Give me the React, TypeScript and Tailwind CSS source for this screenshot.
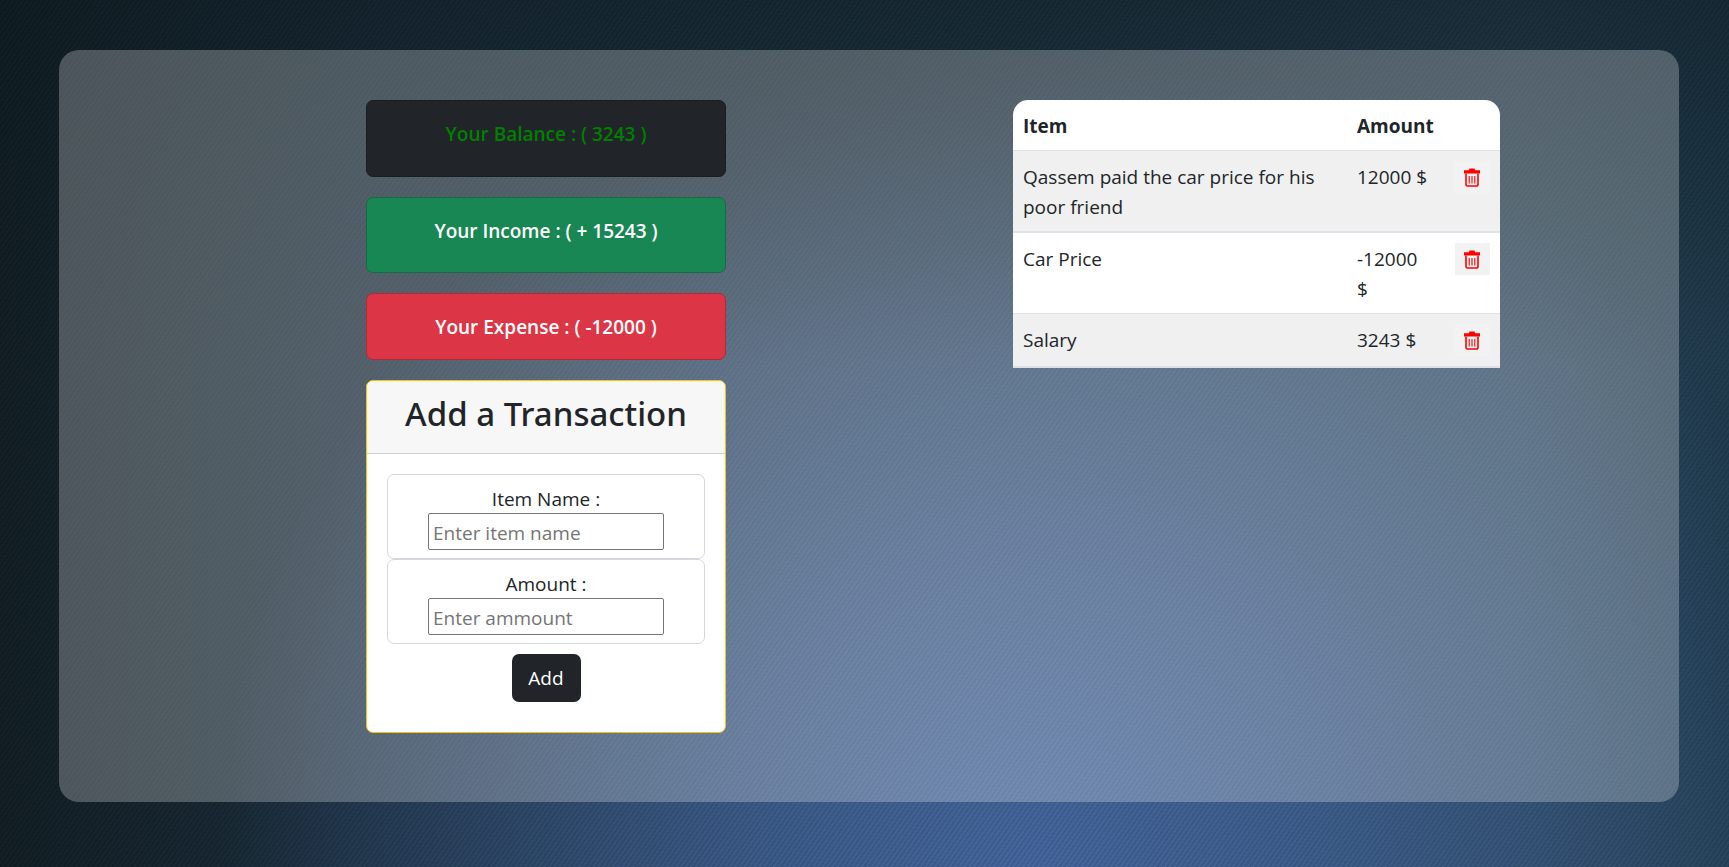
const rows = [
  { item: 'Qassem paid the car price for his poor friend', amount: '12000 $', rowClass: 'border-b-2 bg-[#f0f0f0]' },
  { item: 'Car Price', amount: '-12000 $', rowClass: 'border-b bg-white' },
  { item: 'Salary', amount: '3243 $', rowClass: 'bg-[#f0f0f0]' },
];

function TrashIcon() {
  return (
    <svg width="16" height="19" viewBox="0 0 16 19" className="text-[#ff0000]">
      <path d="M5.5 0.5h5l0.6 1.8H16v3.2H0V2.3h4.9z" fill="currentColor" />
      <path d="M2 5.5V16.5a1.5 1.5 0 0 0 1.5 1.5h9a1.5 1.5 0 0 0 1.5-1.5V5.5" fill="none" stroke="currentColor" strokeWidth="1.6" />
      <path d="M5.2 8v7.5M8 8v7.5M10.8 8v7.5" fill="none" stroke="currentColor" strokeWidth="1.1" />
    </svg>
  );
}

function Summary({ className, children }: { className: string; children: string }) {
  return (
    <div className={`rounded-[7px] border pt-[18px] text-center text-[19px] leading-[30px] font-semibold ${className}`}>
      {children}
    </div>
  );
}

function Field({ label, placeholder }: { label: string; placeholder: string }) {
  return (
    <div className="flex h-[85px] flex-col items-center rounded-[7px] border border-[#d3d7db] pt-[9px]">
      <label className="h-[29px] text-[19px] leading-[30px] text-[#212529]">{label}</label>
      <input
        placeholder={placeholder}
        className="h-[37px] w-[236px] rounded-[2px] border border-[#767676] bg-white px-[4px] pt-[2px] text-[19px] outline-none placeholder:text-[#757575]"
      />
    </div>
  );
}

export default function App() {
  return (
    <div
      className="min-h-screen pt-[50px] pr-[50px] pb-[65px] pl-[59px] font-['Open_Sans','Noto_Sans',sans-serif] [background-color:#1f3340] [background-image:repeating-linear-gradient(125deg,rgba(0,0,0,0.08)_0_2px,rgba(255,255,255,0.012)_2px_4px),linear-gradient(180deg,rgba(12,26,32,0.55)_0%,rgba(12,26,32,0)_42%),radial-gradient(ellipse_820px_820px_at_60%_100%,#43659c_0%,rgba(67,101,156,0.75)_35%,rgba(67,101,156,0)_100%),linear-gradient(90deg,#111d23_0%,#1a2d3c_22%,#22394a_60%,#284356_88%,#1f3a4c_100%)]"
    >
      <div className="flex h-[752px] gap-[287px] rounded-[20px] bg-white/25 pt-[50px] pl-[307px]">
        <div className="flex w-[360px] flex-col gap-[20px]">
          <Summary className="h-[77px] border-[#1a1e21] bg-[#212529] text-[#008000]">Your Balance : ( 3243 )</Summary>
          <Summary className="h-[76px] border-[#146c43] bg-[#198754] text-white">Your Income : ( + 15243 )</Summary>
          <Summary className="h-[67px] border-[#b02a37] bg-[#dc3545] text-white">Your Expense : ( -12000 )</Summary>

          <div className="h-[353px] overflow-hidden rounded-[7px] border border-[#ffc107] bg-white">
            <h2 className="flex h-[73px] items-center justify-center border-b border-[#d0d0d0] bg-[#f7f7f7] pb-[6px] font-['Noto_Sans',sans-serif] text-[33px] font-medium text-[#212529]">
              Add a Transaction
            </h2>
            <div className="px-[20px] pt-[20px]">
              <Field label="Item Name :" placeholder="Enter item name" />
              <Field label="Amount :" placeholder="Enter ammount" />
              <div className="mt-[10px] flex justify-center">
                <button className="h-[48px] w-[69px] rounded-[7px] bg-[#212529] text-[19px] text-white">Add</button>
              </div>
            </div>
          </div>
        </div>

        <div className="h-[268px] w-[487px] overflow-hidden rounded-t-[15px] border-b-2 border-[#dee2e6] bg-white">
          <table className="w-full table-fixed border-collapse text-[19px] leading-[30px] text-[#212529]">
            <colgroup>
              <col className="w-[334px]" />
              <col className="w-[98px]" />
              <col className="w-[55px]" />
            </colgroup>
            <thead>
              <tr className="border-b border-[#dee2e6]">
                <th className="px-[10px] pt-[11px] pb-[9px] text-left font-bold">Item</th>
                <th className="px-[10px] pt-[11px] pb-[9px] text-left font-bold">Amount</th>
                <th />
              </tr>
            </thead>
            <tbody>
              {rows.map((row) => (
                <tr key={row.item} className={`border-[#dee2e6] align-top ${row.rowClass}`}>
                  <td className="px-[10px] pt-[11px] pb-[9px]">{row.item}</td>
                  <td className="pt-[11px] pr-[14px] pb-[9px] pl-[10px]">{row.amount}</td>
                  <td className="p-[10px]">
                    <button className="mb-px flex h-[32px] w-[35px] items-center justify-center bg-[#f2f2f2] pr-px">
                      <TrashIcon />
                    </button>
                  </td>
                </tr>
              ))}
            </tbody>
          </table>
        </div>
      </div>
    </div>
  );
}
